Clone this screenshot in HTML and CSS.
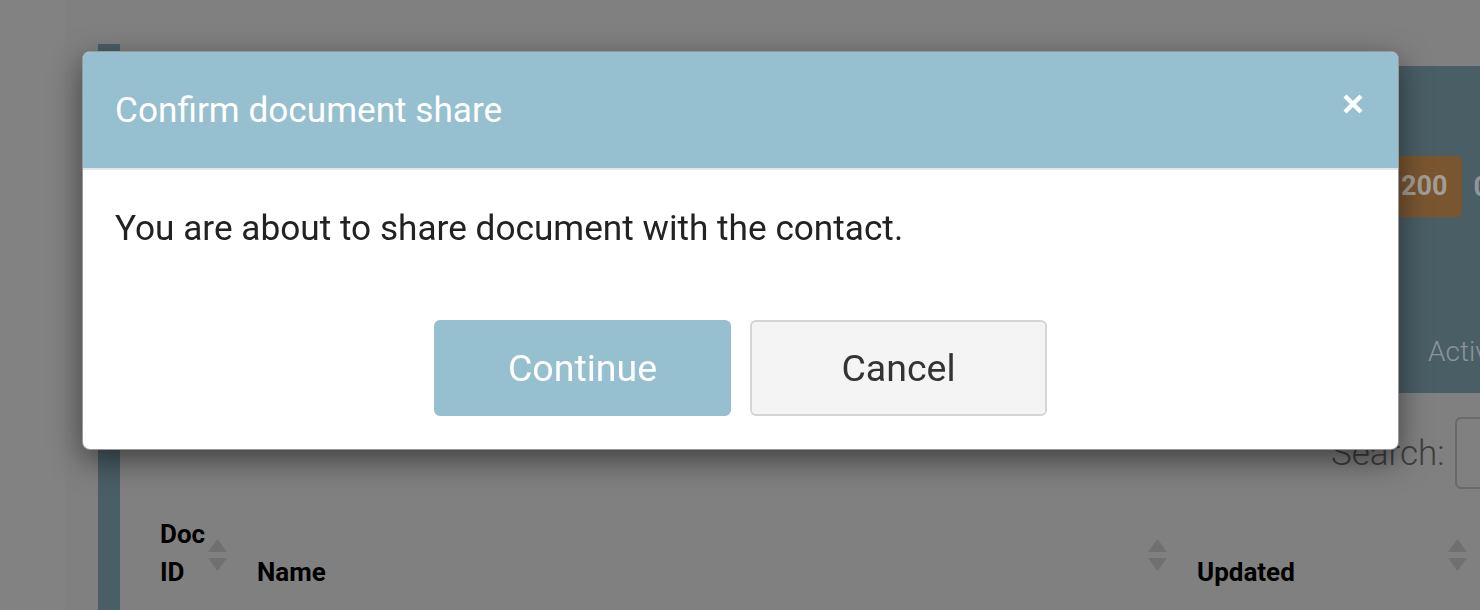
FILE: index.html
```html
<!DOCTYPE html>
<html lang="en">
<head>
<meta charset="utf-8">
<title>Documents</title>
<link rel="stylesheet" href="styles.css">
</head>
<body>
<div class="page">
  <aside class="rail"></aside>
  <main class="main">
    <section class="card">
      <div class="panel">
        <div class="panel-stats">
          <span class="badge">200</span>
          <span class="stat">0</span>
        </div>
        <nav class="tabs">
          <span class="tab">Active</span>
        </nav>
      </div>
      <div class="toolbar">
        <label class="search">Search:<span class="search-input"></span></label>
      </div>
      <div class="thead">
        <div class="th th-id">
          <span class="th-label">Doc ID</span>
          <svg class="sort" viewBox="0 0 19 32" width="19" height="32"><polygon points="9.5,0 19,13 0,13"/><polygon points="0,19 19,19 9.5,32"/></svg>
        </div>
        <div class="th th-name">
          <span class="th-label">Name</span>
          <svg class="sort" viewBox="0 0 19 32" width="19" height="32"><polygon points="9.5,0 19,13 0,13"/><polygon points="0,19 19,19 9.5,32"/></svg>
        </div>
        <div class="th th-updated">
          <span class="th-label">Updated</span>
          <svg class="sort" viewBox="0 0 19 32" width="19" height="32"><polygon points="9.5,0 19,13 0,13"/><polygon points="0,19 19,19 9.5,32"/></svg>
        </div>
      </div>
    </section>
  </main>
</div>

<div class="backdrop">
  <div class="modal" role="dialog" aria-labelledby="modal-title">
    <div class="modal-header">
      <h4 class="modal-title" id="modal-title">Confirm document share</h4>
      <button class="close" type="button" aria-label="Close">
        <svg viewBox="0 0 20 20" width="20" height="20"><line x1="2" y1="2" x2="18" y2="18"/><line x1="18" y1="2" x2="2" y2="18"/></svg>
      </button>
    </div>
    <div class="modal-body">You are about to share document with the contact.</div>
    <div class="modal-footer">
      <button class="btn btn-primary" type="button">Continue</button>
      <button class="btn btn-default" type="button">Cancel</button>
    </div>
  </div>
</div>
</body>
</html>
```

FILE: styles.css
```css
html, body {
  margin: 0;
  height: 100%;
  overflow: hidden;
}

body {
  background: #808080;
  font-family: Roboto, "Liberation Sans", sans-serif;
}

/* ---------- dimmed page behind the dialog ---------- */
.page {
  display: flex;
  width: 1480px;
  height: 610px;
  overflow: hidden;
}

.rail {
  flex: none;
  width: 65px;
  background: #828282;
}

.main {
  flex: 1;
  min-width: 0;
  padding: 44px 0 0 33px;
}

.card {
  border-left: 22px solid #4a5e66;
  padding-top: 22px;
  height: 100%;
  box-sizing: border-box;
  overflow: hidden;
}

.panel {
  background: #4a5e66;
  height: 327px;
  display: flex;
  flex-direction: column;
  overflow: hidden;
}

.panel-stats {
  display: flex;
  align-items: center;
  gap: 11px;
  margin: 90px 0 0 1267px;
  white-space: nowrap;
}

.badge {
  flex: none;
  background: #7a5630;
  color: #a39d95;
  font-weight: 700;
  font-size: 27px;
  line-height: 61px;
  padding: 0 15px 0 14px;
  border-radius: 6px;
}

.stat {
  flex: none;
  color: #8f979b;
  font-size: 27px;
  font-weight: 700;
}

.tabs {
  margin-top: auto;
  padding-left: 1308px;
  white-space: nowrap;
}

.tab {
  display: inline-block;
  color: #8a9499;
  font-weight: 300;
  font-size: 28px;
  line-height: 40px;
  padding-bottom: 21px;
}

.toolbar {
  padding-top: 24px;
  white-space: nowrap;
}

.search {
  display: inline-flex;
  align-items: center;
  gap: 10px;
  margin-left: 1211px;
  color: #3e3e3e;
  font-weight: 300;
  font-size: 35px;
}

.search-input {
  display: inline-block;
  width: 200px;
  height: 72px;
  box-sizing: border-box;
  border: 2px solid #6a6a6a;
  border-radius: 6px;
}

.thead {
  display: grid;
  grid-template-columns: 97px 940px 300px;
  margin: 16px 0 0 30px;
}

.th {
  display: flex;
  align-items: flex-end;
  justify-content: space-between;
  gap: 3px;
  padding: 10px 20px 10px 10px;
  color: #000;
  font-weight: 700;
  font-size: 26px;
  line-height: 38px;
}

.th-label {
  min-width: 0;
}

.sort {
  flex: none;
  align-self: center;
  margin-top: 4px;
  fill: #707070;
}

/* ---------- dialog ---------- */
.backdrop {
  position: fixed;
  inset: 0;
  display: flex;
  justify-content: center;
  align-items: flex-start;
  padding: 51px 0 0 1px;
}

.modal {
  width: 1317px;
  box-sizing: border-box;
  background: #fff;
  border: 1px solid rgba(0, 0, 0, 0.4);
  border-radius: 8px;
  box-shadow: 0 10px 30px rgba(0, 0, 0, 0.5);
  overflow: hidden;
}

.modal-header {
  display: flex;
  justify-content: space-between;
  align-items: flex-start;
  background: #96bfd0;
  border-bottom: 2px solid #e5e5e5;
  padding: 38px 35px 38px 32px;
}

.modal-title {
  margin: 0;
  color: #fff;
  font-weight: 400;
  font-size: 35.2px;
  line-height: 40px;
}

.close {
  flex: none;
  width: 20px;
  height: 20px;
  margin-top: 4px;
  padding: 0;
  border: 0;
  background: none;
  cursor: pointer;
}

.close svg {
  display: block;
  stroke: #fff;
  stroke-width: 4.5;
}

.modal-body {
  padding: 33px 32px 0;
  color: #222;
  font-size: 35.2px;
  line-height: 50px;
}

.modal-footer {
  display: flex;
  justify-content: center;
  gap: 19px;
  padding: 67px 0 33px;
}

.btn {
  width: 297px;
  height: 96px;
  box-sizing: border-box;
  border-radius: 6px;
  font-family: Roboto, "Liberation Sans", sans-serif;
  font-weight: 400;
  font-size: 37.5px;
  cursor: pointer;
}

.btn-primary {
  background: #96bfd0;
  border: 2px solid #96bfd0;
  color: #fff;
}

.btn-default {
  background: #f4f4f4;
  border: 2px solid #d5d5d5;
  color: #333;
}
```
